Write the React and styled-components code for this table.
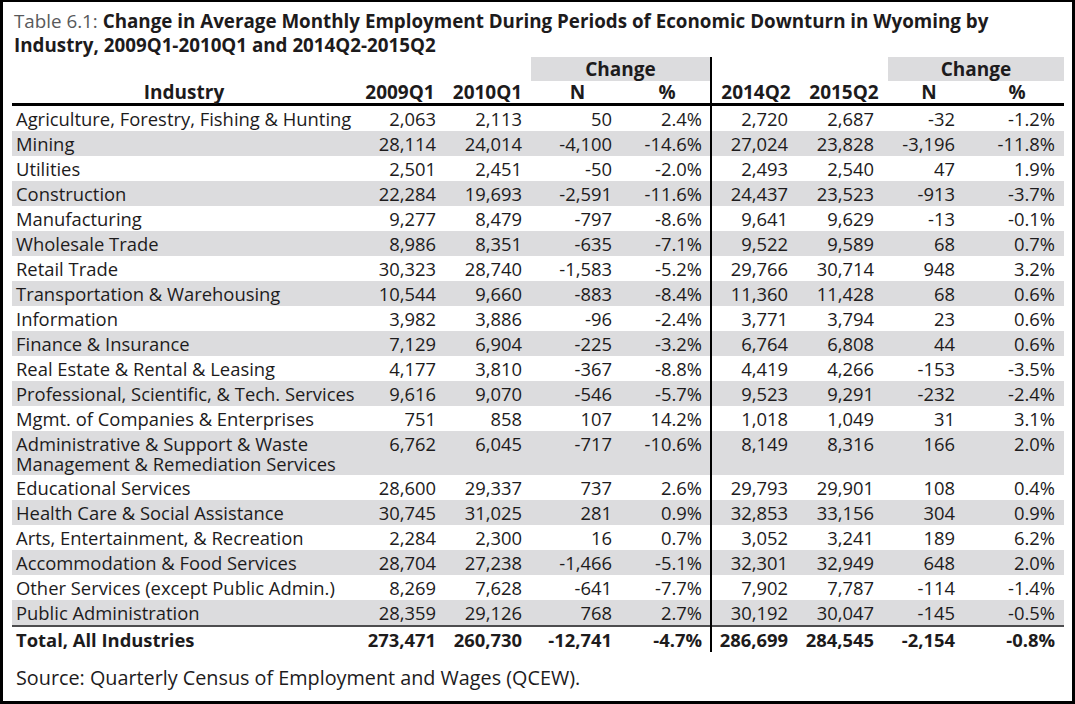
import React from "react";
import styled, { createGlobalStyle } from "styled-components";

const Global = createGlobalStyle`
  html, body { margin: 0; padding: 0; background: #fff; }
  body { font-family: "Open Sans", "Noto Sans", sans-serif; color: #1d1b1c; }
`;

const Frame = styled.div`
  box-sizing: border-box;
  width: 1075px;
  height: 704px;
  border-style: solid;
  border-color: #000;
  border-width: 2px 3px 3px 3px;
  padding: 7px 8px 0 9px;
  background: #fff;
`;

const Title = styled.h1`
  margin: 0 0 0 2px;
  font-size: 18.8px;
  line-height: 24px;
  font-weight: 700;
  color: #1d1b1c;
  white-space: nowrap;
`;

const Label = styled.span`
  font-weight: 400;
  color: #58595b;
`;

const Table = styled.table`
  width: 1052px;
  table-layout: fixed;
  border-collapse: collapse;
  font-size: 18.4px;
`;

const GroupCell = styled.th`
  height: 24px;
  padding: 0;
  font-size: 19px;
  font-weight: 700;
  line-height: 24px;
  text-align: center;
  background: ${(p) => (p.$shaded ? "#dcdcde" : "transparent")};
  border-right: ${(p) => (p.$divider ? "2px solid #000" : "none")};
`;

const HeadCell = styled.th`
  height: 22px;
  padding: 0;
  font-size: 19px;
  font-weight: 700;
  line-height: 22px;
  text-align: center;
  border-bottom: 3px solid #000;
  border-right: ${(p) => (p.$divider ? "2px solid #000" : "none")};
`;

const Row = styled.tr`
  background: ${(p) => (p.$shaded ? "#dcdcde" : "transparent")};
  border-bottom: ${(p) => (p.$rule ? "2px solid #4d4d4f" : "none")};
`;

const NameCell = styled.td`
  padding: 3px 0 ${(p) => (p.$tall ? 1 : 2)}px 4px;
  line-height: 20px;
  text-align: left;
  vertical-align: top;
  white-space: nowrap;
  font-weight: ${(p) => (p.$bold ? 700 : 400)};
`;

const NumCell = styled.td`
  padding: 3px ${(p) => p.$pr}px 2px 0;
  line-height: 20px;
  text-align: right;
  vertical-align: top;
  white-space: nowrap;
  font-weight: ${(p) => (p.$bold ? 700 : 400)};
  border-right: ${(p) => (p.$divider ? "2px solid #000" : "none")};
`;

const Source = styled.p`
  margin: 14px 0 0 4px;
  font-size: 19.8px;
  line-height: 24px;
`;

const colWidths = [344, 88, 87, 93, 87, 89, 88, 82, 94];
const pads = [8, 9, 12, 8, 12, 14, 15, 9];

const rows = [
  ["Agriculture, Forestry, Fishing & Hunting", "2,063", "2,113", "50", "2.4%", "2,720", "2,687", "-32", "-1.2%"],
  ["Mining", "28,114", "24,014", "-4,100", "-14.6%", "27,024", "23,828", "-3,196", "-11.8%"],
  ["Utilities", "2,501", "2,451", "-50", "-2.0%", "2,493", "2,540", "47", "1.9%"],
  ["Construction", "22,284", "19,693", "-2,591", "-11.6%", "24,437", "23,523", "-913", "-3.7%"],
  ["Manufacturing", "9,277", "8,479", "-797", "-8.6%", "9,641", "9,629", "-13", "-0.1%"],
  ["Wholesale Trade", "8,986", "8,351", "-635", "-7.1%", "9,522", "9,589", "68", "0.7%"],
  ["Retail Trade", "30,323", "28,740", "-1,583", "-5.2%", "29,766", "30,714", "948", "3.2%"],
  ["Transportation & Warehousing", "10,544", "9,660", "-883", "-8.4%", "11,360", "11,428", "68", "0.6%"],
  ["Information", "3,982", "3,886", "-96", "-2.4%", "3,771", "3,794", "23", "0.6%"],
  ["Finance & Insurance", "7,129", "6,904", "-225", "-3.2%", "6,764", "6,808", "44", "0.6%"],
  ["Real Estate & Rental & Leasing", "4,177", "3,810", "-367", "-8.8%", "4,419", "4,266", "-153", "-3.5%"],
  ["Professional, Scientific, & Tech. Services", "9,616", "9,070", "-546", "-5.7%", "9,523", "9,291", "-232", "-2.4%"],
  ["Mgmt. of Companies & Enterprises", "751", "858", "107", "14.2%", "1,018", "1,049", "31", "3.1%"],
  [["Administrative & Support & Waste", "Management & Remediation Services"], "6,762", "6,045", "-717", "-10.6%", "8,149", "8,316", "166", "2.0%"],
  ["Educational Services", "28,600", "29,337", "737", "2.6%", "29,793", "29,901", "108", "0.4%"],
  ["Health Care & Social Assistance", "30,745", "31,025", "281", "0.9%", "32,853", "33,156", "304", "0.9%"],
  ["Arts, Entertainment, & Recreation", "2,284", "2,300", "16", "0.7%", "3,052", "3,241", "189", "6.2%"],
  ["Accommodation & Food Services", "28,704", "27,238", "-1,466", "-5.1%", "32,301", "32,949", "648", "2.0%"],
  ["Other Services (except Public Admin.)", "8,269", "7,628", "-641", "-7.7%", "7,902", "7,787", "-114", "-1.4%"],
  ["Public Administration", "28,359", "29,126", "768", "2.7%", "30,192", "30,047", "-145", "-0.5%"],
];

const total = ["Total, All Industries", "273,471", "260,730", "-12,741", "-4.7%", "286,699", "284,545", "-2,154", "-0.8%"];

function DataRow({ cells, shaded, rule, bold }) {
  const [name, ...nums] = cells;
  const tall = Array.isArray(name);
  return (
    <Row $shaded={shaded} $rule={rule}>
      <NameCell $tall={tall} $bold={bold}>
        {tall ? (
          <>
            {name[0]}
            <br />
            {name[1]}
          </>
        ) : (
          name
        )}
      </NameCell>
      {nums.map((v, i) => (
        <NumCell key={i} $pr={pads[i]} $divider={i === 3} $bold={bold}>
          {v}
        </NumCell>
      ))}
    </Row>
  );
}

export default function App() {
  return (
    <>
      <Global />
      <Frame>
        <Title>
          <Label>Table 6.1: </Label>
          Change in Average Monthly Employment During Periods of Economic Downturn in Wyoming by
          <br />
          Industry, 2009Q1-2010Q1 and 2014Q2-2015Q2
        </Title>
        <Table>
          <colgroup>
            {colWidths.map((w, i) => (
              <col key={i} style={{ width: w }} />
            ))}
          </colgroup>
          <thead>
            <tr>
              <GroupCell colSpan={3} />
              <GroupCell colSpan={2} $shaded $divider>
                Change
              </GroupCell>
              <GroupCell colSpan={2} />
              <GroupCell colSpan={2} $shaded>
                Change
              </GroupCell>
            </tr>
            <tr>
              <HeadCell>Industry</HeadCell>
              <HeadCell>2009Q1</HeadCell>
              <HeadCell>2010Q1</HeadCell>
              <HeadCell>N</HeadCell>
              <HeadCell $divider>%</HeadCell>
              <HeadCell>2014Q2</HeadCell>
              <HeadCell>2015Q2</HeadCell>
              <HeadCell>N</HeadCell>
              <HeadCell>%</HeadCell>
            </tr>
          </thead>
          <tbody>
            {rows.map((r, i) => (
              <DataRow key={i} cells={r} shaded={i % 2 === 1} rule={i === rows.length - 1} />
            ))}
            <DataRow cells={total} bold />
          </tbody>
        </Table>
        <Source>Source: Quarterly Census of Employment and Wages (QCEW).</Source>
      </Frame>
    </>
  );
}
